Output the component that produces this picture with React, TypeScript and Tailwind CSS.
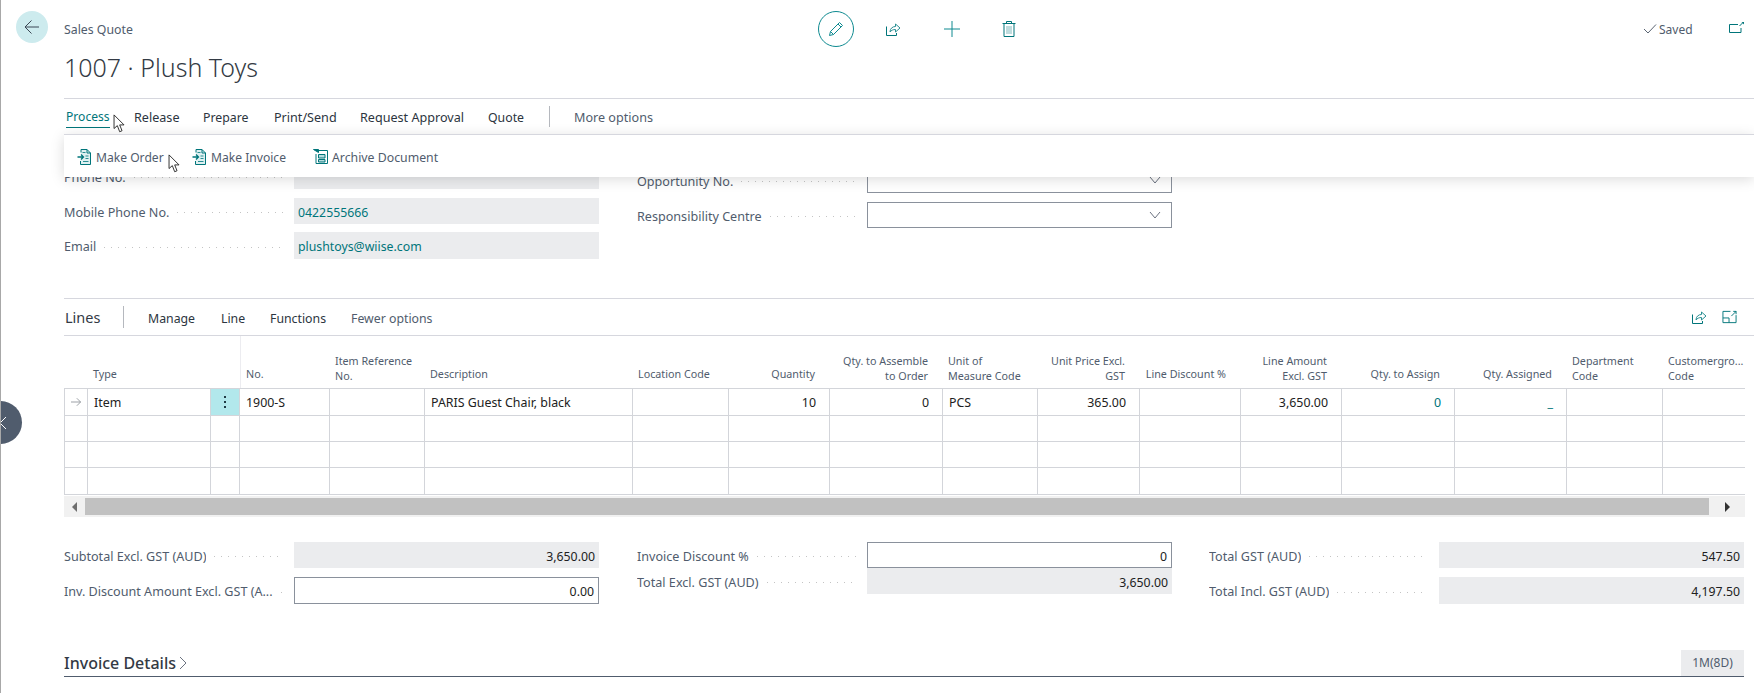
const TEAL = "#00757a";

function CursorArrow({ className }: { className: string }) {
  return (
    <svg viewBox="0 0 14 22" className={className} fill="#fff" stroke="#222" strokeWidth="1">
      <path d="M1 1 L1 16 L4.6 12.8 L7.2 19.5 L9.8 18.4 L7.2 12 L12 12 Z" />
    </svg>
  );
}

function DocIcon({ x }: { x: string }) {
  return (
    <svg viewBox="0 0 14 16" className={`absolute top-[149px] h-[16px] w-[14px] ${x}`} fill="none" stroke={TEAL} strokeWidth="1">
      <path d="M4 3.500V0.500h6l3.500 3.500v11.500H3.500V12" fill="#dff0f1" />
      <path d="M10 0.500V4h3.500" />
      <path d="M5.500 3.500h3M8.500 7h3M8.500 9.500h3M6 12.500h5.500" stroke="#2a8f93" />
      <path d="M0.500 8h5.500M4 5.500 6.500 8 4 10.500" strokeWidth="1.300" />
    </svg>
  );
}

function ArchiveIcon() {
  return (
    <svg viewBox="0 0 15 15" className="absolute left-[312px] top-[149px] h-[15px] w-[15px]" fill="none" stroke={TEAL} strokeWidth="1">
      <path d="M0.500 0.500 5.500 3.500V0.500Z" fill={TEAL} />
      <path d="M5.500 1.500h9v13H3V5" />
      <path d="M5.500 5.500h6.500v3.500H5.500zM5.500 10.500h6.500v2.500H5.500z" fill="#b5dcde" />
    </svg>
  );
}

function ShareIcon({ className }: { className: string }) {
  return (
    <svg viewBox="0 0 16 16" className={className} fill="none" stroke={TEAL} strokeWidth="1">
      <path d="M1.500 5.500v9h10V12" />
      <path d="M5 11c0-3.500 2.500-5.500 5.500-5.500V3l4.500 4-4.500 4V8.500C8 8.500 6.300 9.300 5 11Z" stroke="#2a8f93" />
    </svg>
  );
}

function Chevron() {
  return (
    <svg viewBox="0 0 12 8" className="h-[8px] w-[12px]" fill="none" stroke="#6b7280" strokeWidth="1">
      <path d="M1 1l5 6 5-6" />
    </svg>
  );
}

type FieldKind = "readonly" | "input" | "select";

function Field({
  label,
  value,
  kind = "readonly",
  link,
  right,
  h = "h-[26px]",
}: {
  label: string;
  value?: string;
  kind?: FieldKind;
  link?: boolean;
  right?: boolean;
  h?: string;
}) {
  return (
    <div className="flex items-center">
      <div className="relative top-[2px] flex w-[230px] items-center pr-[11px] text-[12.6px]">
        <span className="shrink-0 truncate text-[#505c6d]">{label}</span>
        <span className="ml-[8px] h-[1px] flex-1 bg-[linear-gradient(to_right,#c4c4c4_1px,transparent_1px)] bg-[length:7px_1px] bg-repeat-x" />
      </div>
      <div
        className={`flex w-[305px] items-center px-[4px] text-[12.3px] ${h} ${
          kind === "readonly"
            ? "bg-[#ebecee]"
            : "border border-[#8a919c] bg-white"
        } ${right ? "justify-end" : ""} ${link ? "text-[#00757a]" : "text-[#212121]"}`}
      >
        <span className="relative top-[2px]">{value}</span>
        {kind === "select" && (
          <span className="ml-auto mr-[6px]">
            <Chevron />
          </span>
        )}
      </div>
    </div>
  );
}

const columns = [
  { w: 24, label: "" },
  { w: 123, label: "Type" },
  { w: 29, label: "" },
  { w: 90, label: "No." },
  { w: 95, label: "Item Reference\nNo." },
  { w: 208, label: "Description" },
  { w: 96, label: "Location Code" },
  { w: 101, label: "Quantity", right: true },
  { w: 113, label: "Qty. to Assemble\nto Order", right: true },
  { w: 95, label: "Unit of\nMeasure Code" },
  { w: 102, label: "Unit Price Excl.\nGST", right: true },
  { w: 101, label: "Line Discount %", right: true },
  { w: 101, label: "Line Amount\nExcl. GST", right: true },
  { w: 113, label: "Qty. to Assign", right: true },
  { w: 112, label: "Qty. Assigned", right: true },
  { w: 96, label: "Department\nCode" },
  { w: 81, label: "Customergro...\nCode" },
];

const firstRow = [
  <svg key="a" viewBox="0 0 12 10" className="mx-auto h-[10px] w-[12px] -translate-y-[1px]" fill="none" stroke="#8a8f96" strokeWidth="1">
    <path d="M0 5h11.500M7 0.500 11.500 5 7 9.500" />
  </svg>,
  "Item",
  <span key="d" className="flex -translate-y-[1px] flex-col items-center gap-[3px]">
    <i className="h-[2px] w-[2px] bg-[#1f3a44]" />
    <i className="h-[2px] w-[2px] bg-[#1f3a44]" />
    <i className="h-[2px] w-[2px] bg-[#1f3a44]" />
  </span>,
  "1900-S",
  "",
  "PARIS Guest Chair, black",
  "",
  "10",
  "0",
  "PCS",
  "365.00",
  "",
  "3,650.00",
  <span key="q" className="text-[#00757a]">0</span>,
  <span key="u" className="text-[#00757a]">_</span>,
  "",
  "",
];

function LinesGrid() {
  return (
    <div className="text-[12.4px] text-[#212121]">
      <div className="flex h-[52px]">
        {columns.map((c, i) => (
          <div
            key={i}
            style={{ width: c.w }}
            className={`flex h-full shrink-0 flex-col justify-end whitespace-pre-line pl-[5px] text-[10.75px] leading-[15px] text-[#505c6d] ${
              c.label.includes("\n") ? "pb-[4px]" : "pb-[6px]"
            } ${c.right ? "items-end pr-[15px] text-right" : ""} ${i === 3 ? "border-l border-[#ececf0]" : ""}`}
          >
            <span className="block">{c.label}</span>
          </div>
        ))}
      </div>
      {[0, 1, 2, 3].map((r) => (
        <div
          key={r}
          className={`flex border-t border-[#d3d5da] ${
            r === 0 ? "h-[27px]" : r === 3 ? "h-[28px] border-b" : "h-[26px]"
          }`}
        >
          {columns.map((c, i) => (
            <div
              key={i}
              style={{ width: c.w }}
              className={`flex shrink-0 items-center border-r border-[#d3d5da] pt-[2px] ${
                c.right ? "justify-end pr-[13px]" : "px-[6px]"
              } ${r === 0 && i === 2 ? "justify-center bg-[#b2e8ec]" : ""} ${i === 16 ? "border-r-0" : ""} ${
                i === 0 ? "border-l" : ""
              }`}
            >
              {r === 0 ? firstRow[i] : null}
            </div>
          ))}
        </div>
      ))}
    </div>
  );
}

export default function App() {
  return (
    <div className="relative h-[693px] w-[1754px] overflow-hidden border-l border-[#a8a8a8] bg-white text-[12.3px] text-[#2c3540] [font-family:'Noto_Sans',sans-serif]">
      {/* page header */}
      <button className="absolute left-[15px] top-[11px] flex h-[32px] w-[32px] items-center justify-center rounded-full bg-[#cdebee]">
        <svg viewBox="0 0 16 16" className="h-[16px] w-[16px]" fill="none" stroke="#3b4754" strokeWidth="1">
          <path d="M15 8H1M7.500 1.500 1 8l6.500 6.500" />
        </svg>
      </button>
      <div className="absolute left-[63px] top-[21px] text-[12.3px] leading-[18px] text-[#505c6d]">Sales Quote</div>
      <h1 className="absolute left-[63px] top-[49px] text-[25px] font-light leading-[36px] text-[#333a44]">1007 · Plush Toys</h1>

      <div className="absolute left-[817px] top-[11px] flex h-[36px] w-[36px] items-center justify-center rounded-full border border-[#0e8a90]">
        <svg viewBox="0 0 16 16" className="h-[16px] w-[16px]" fill="none" stroke="#0e8a90" strokeWidth="1">
          <path d="M1.500 14.500 2.500 10.500 11.500 1.500 14.500 4.500 5.500 13.500Z M2.500 10.500 5.500 13.500 M10 3 13 6" />
        </svg>
      </div>
      <ShareIcon className="absolute left-[884px] top-[21px] h-[16px] w-[16px]" />
      <svg viewBox="0 0 16 16" className="absolute left-[943px] top-[21px] h-[16px] w-[16px]" fill="none" stroke="#0e8a90" strokeWidth="1">
        <path d="M8 0v16M0 8h16" />
      </svg>
      <svg viewBox="0 0 14 16" className="absolute left-[1001px] top-[21px] h-[16px] w-[14px]" fill="none" stroke={TEAL} strokeWidth="1">
        <path d="M0.500 2.500h13M4.500 2.500V0.500h5v2M2 2.500v13h10v-13" />
        <path d="M5 5v8M7 5v8M9 5v8" stroke="#7fb9bc" />
      </svg>

      <svg viewBox="0 0 14 10" className="absolute left-[1642px] top-[24px] h-[10px] w-[14px]" fill="none" stroke="#5a6472" strokeWidth="1">
        <path d="M1 5l4 4 8-8.500" />
      </svg>
      <span className="absolute left-[1658px] top-[21px] text-[12px] leading-[18px] text-[#505c6d]">Saved</span>
      <svg viewBox="0 0 15 11" className="absolute left-[1728px] top-[22px] h-[11px] w-[15px]" fill="none" stroke={TEAL} strokeWidth="1">
        <path d="M9 2.500H0.500v8H12V6" />
        <path d="M10.500 4 13.500 1" />
        <path d="M12.500 0h2.500v2.500Z" fill={TEAL} stroke="none" />
      </svg>

      {/* action bar */}
      <div className="absolute left-[63px] right-0 top-[98px] h-[37px] border-y border-[#d6d7de]" />
      <div className="absolute top-[109px] flex h-[18px] items-center text-[12.6px] leading-[18px]">
        <span className="absolute left-[65px] border-b-[1.5px] border-[#00757a] pb-[1px] text-[12.1px] text-[#00757a]">Process</span>
        <span className="absolute left-[133px]">Release</span>
        <span className="absolute left-[202px] text-[12.3px]">Prepare</span>
        <span className="absolute left-[273px]">Print/Send</span>
        <span className="absolute left-[359px] whitespace-nowrap">Request Approval</span>
        <span className="absolute left-[487px] text-[12.3px]">Quote</span>
        <span className="absolute left-[573px] whitespace-nowrap text-[#505c6d]">More options</span>
      </div>
      <div className="absolute left-[548px] top-[106px] h-[21px] w-px bg-[#b5b8be]" />

      {/* fields, partly under the action popup */}
      <div className="absolute left-[63px] top-[163px] w-[535px]">
        <div className="mb-[9px]">
          <Field label="Phone No." />
        </div>
        <div className="mb-[8px]">
          <Field label="Mobile Phone No." value="0422555666" link />
        </div>
        <Field label="Email" value="plushtoys@wiise.com" link h="h-[27px]" />
      </div>
      <div className="absolute left-[636px] top-[167px] w-[535px] space-y-[9px]">
        <Field label="Opportunity No." kind="select" />
        <Field label="Responsibility Centre" kind="select" />
      </div>

      {/* popup */}
      <div className="absolute left-[63px] right-0 top-[135px] h-[42px] bg-white shadow-[0_2px_13px_rgba(0,0,0,0.15)]" />
      <div className="absolute left-[63px] right-0 top-[134px] h-px bg-[#d6d7de]" />
      <DocIcon x="left-[76px]" />
      <span className="absolute left-[95px] top-[149px] text-[12.1px] leading-[18px] text-[#505c6d]">Make Order</span>
      <DocIcon x="left-[191px]" />
      <span className="absolute left-[210px] top-[149px] text-[12.1px] leading-[18px] text-[#505c6d]">Make Invoice</span>
      <ArchiveIcon />
      <span className="absolute left-[331px] top-[149px] text-[12.3px] leading-[18px] text-[#505c6d]">Archive Document</span>
      <CursorArrow className="absolute left-[112px] top-[114px] h-[20px] w-[13px]" />
      <CursorArrow className="absolute left-[167px] top-[154px] h-[20px] w-[13px]" />

      {/* lines */}
      <div className="absolute left-[63px] right-0 top-[298px] h-[38px] border-y border-[#d6d7de]" />
      <span className="absolute left-[64px] top-[307px] text-[14.500px] leading-[20px] text-[#333a44]">Lines</span>
      <div className="absolute left-[122px] top-[306px] h-[22px] w-px bg-[#b5b8be]" />
      <span className="absolute left-[147px] top-[310px] leading-[18px]">Manage</span>
      <span className="absolute left-[220px] top-[310px] leading-[18px]">Line</span>
      <span className="absolute left-[269px] top-[310px] leading-[18px]">Functions</span>
      <span className="absolute left-[350px] top-[310px] whitespace-nowrap leading-[18px] text-[#505c6d]">Fewer options</span>
      <ShareIcon className="absolute left-[1690px] top-[309px] h-[16px] w-[16px]" />
      <svg viewBox="0 0 16 14" className="absolute left-[1721px] top-[310px] h-[14px] w-[15px]" fill="none" stroke={TEAL} strokeWidth="1">
        <path d="M9 1H1v12h14V5M1 8h6.500v5M10 6l5-5M12 1h3v3" />
      </svg>

      <div className="absolute left-[63px] top-[336px] w-[1681px]">
        <LinesGrid />
        {/* scrollbar */}
        <div className="mt-[1px] flex h-[21px] items-center bg-[#f1f1f1]">
          <div className="flex w-[21px] justify-center">
            <i className="ml-[-1px] h-0 w-0 border-y-[5px] border-r-[5px] border-y-transparent border-r-[#6e6e6e]" />
          </div>
          <div className="h-[17px] w-[1624px] bg-[#c1c1c1]" />
          <div className="flex flex-1 justify-center">
            <i className="h-0 w-0 border-y-[5px] border-l-[5px] border-y-transparent border-l-[#333]" />
          </div>
        </div>
      </div>

      {/* side pane toggle */}
      <div className="absolute left-[-24px] top-[401px] flex h-[43px] w-[45px] items-center justify-end rounded-full bg-[#505c6d] pr-[15px]">
        <svg viewBox="0 0 8 14" className="h-[14px] w-[8px]" fill="none" stroke="#fff" strokeWidth="1">
          <path d="M7 1 1 7l6 6" />
        </svg>
      </div>

      {/* totals */}
      <div className="absolute left-[63px] top-[542px] w-[535px] space-y-[9px]">
        <Field label="Subtotal Excl. GST (AUD)" value="3,650.00" right />
        <Field label="Inv. Discount Amount Excl. GST (A..." value="0.00" kind="input" right h="h-[27px]" />
      </div>
      <div className="absolute left-[636px] top-[542px] w-[535px]">
        <Field label="Invoice Discount %" value="0" kind="input" right />
        <Field label="Total Excl. GST (AUD)" value="3,650.00" right />
      </div>
      <div className="absolute left-[1208px] top-[542px] w-[535px] space-y-[9px]">
        <Field label="Total GST (AUD)" value="547.50" right />
        <Field label="Total Incl. GST (AUD)" value="4,197.50" right h="h-[27px]" />
      </div>

      {/* invoice details */}
      <div className="absolute left-[63px] top-[650px] flex h-[27px] w-[1680px] items-center border-b border-[#505c6d]">
        <span className="text-[16px] font-medium leading-[22px] text-[#333a44]">Invoice Details</span>
        <svg viewBox="0 0 8 14" className="ml-[3px] h-[14px] w-[8px]" fill="none" stroke="#6b7280" strokeWidth="1">
          <path d="M1 1l6 6-6 6" />
        </svg>
        <span className="ml-auto flex h-[26px] w-[63px] items-center justify-center bg-[#ebecee] text-[12px] text-[#505c6d]">1M(8D)</span>
      </div>
    </div>
  );
}
